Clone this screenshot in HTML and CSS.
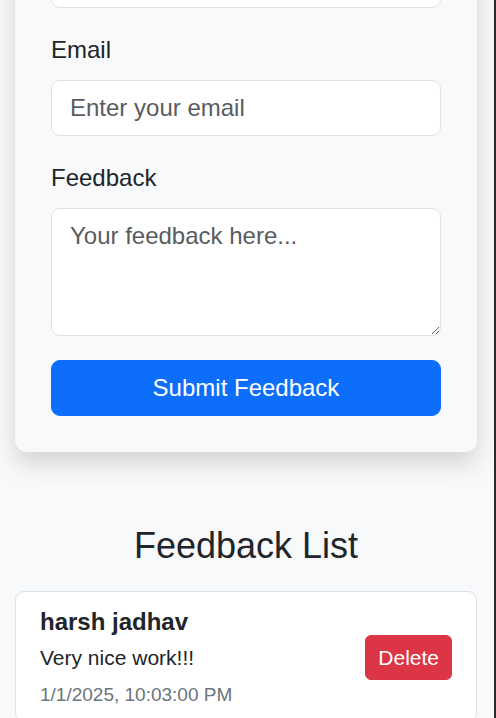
FILE: index.html
```html
<!DOCTYPE html>
<html lang="en">
<head>
<meta charset="utf-8">
<title>Feedback</title>
<link rel="stylesheet" href="styles.css">
</head>
<body>
<div class="frame">
  <main class="page">
    <form class="form-card">
      <div class="field field-first">
        <input class="control" id="name" type="text" aria-label="Name">
      </div>
      <div class="field">
        <label class="label" for="email">Email</label>
        <input class="control" id="email" type="email" placeholder="Enter your email">
      </div>
      <div class="field">
        <label class="label" for="fb">Feedback</label>
        <textarea class="control area" id="fb" rows="3" placeholder="Your feedback here..."></textarea>
      </div>
      <button class="submit" type="button">Submit Feedback</button>
    </form>

    <h2 class="list-title">Feedback List</h2>

    <div class="item">
      <div class="item-body">
        <div class="item-name">harsh jadhav</div>
        <p class="item-msg">Very nice work!!!</p>
        <div class="item-date">1/1/2025, 10:03:00 PM</div>
      </div>
      <button class="delete" type="button">Delete</button>
    </div>
  </main>
</div>
</body>
</html>
```

FILE: styles.css
```css
* { box-sizing: border-box; }
html, body {
  margin: 0;
  padding: 0;
  height: 100%;
  overflow: hidden;
}
body {
  background: #f8f9fa;
  font-family: "Liberation Sans", Arial, sans-serif;
  color: #212529;
  font-size: 24px;
  line-height: 1.5;
}
.frame {
  height: 100%;
  border-right: 2px solid #2a2a2a;
  overflow: hidden;
}
.page {
  padding: 0 17px 0 15px;
  margin-top: -84px;
}
.form-card {
  background: #f8f9fa;
  border-radius: 12px;
  padding: 36px;
  box-shadow: 0 12px 24px rgba(0, 0, 0, 0.15);
}
.field {
  margin-bottom: 24px;
}
.label {
  display: block;
  margin-bottom: 12px;
  font-size: 24px;
  line-height: 36px;
}
.control {
  display: block;
  width: 100%;
  font-family: inherit;
  font-size: 24px;
  line-height: 36px;
  color: #212529;
  background: #fff;
  border: 1px solid #dee2e6;
  border-radius: 9px;
  padding: 9px 18px;
  margin: 0;
  outline: none;
}
.control::placeholder {
  color: #595c5f;
  opacity: 1;
}
.area {
  height: 128px;
  resize: vertical;
}
.submit {
  display: block;
  width: 100%;
  height: 56px;
  border: 1px solid #0d6efd;
  background: #0d6efd;
  color: #fff;
  font-family: inherit;
  font-size: 24px;
  line-height: 36px;
  border-radius: 9px;
  padding: 9px 18px;
}
.list-title {
  margin: 72px 0 24px;
  text-align: center;
  font-weight: 400;
  font-size: 36px;
  line-height: 1.2;
}
.item {
  display: flex;
  align-items: center;
  justify-content: space-between;
  background: #fff;
  border: 1px solid #dee2e6;
  border-radius: 9px;
  padding: 12px 24px;
}
.item-name {
  font-weight: 700;
  font-size: 24px;
  line-height: 36px;
  margin-bottom: 2px;
}
.item-msg {
  margin: 0 0 7px;
  font-size: 21px;
  line-height: 31.5px;
}
.item-date {
  font-size: 19px;
  line-height: 28.5px;
  color: #6c757d;
}
.delete {
  background: #dc3545;
  border: 1px solid #dc3545;
  color: #fff;
  font-family: inherit;
  font-size: 21px;
  line-height: 31.5px;
  padding: 6px 12px;
  border-radius: 6px;
  margin-top: 2px;
}
```
